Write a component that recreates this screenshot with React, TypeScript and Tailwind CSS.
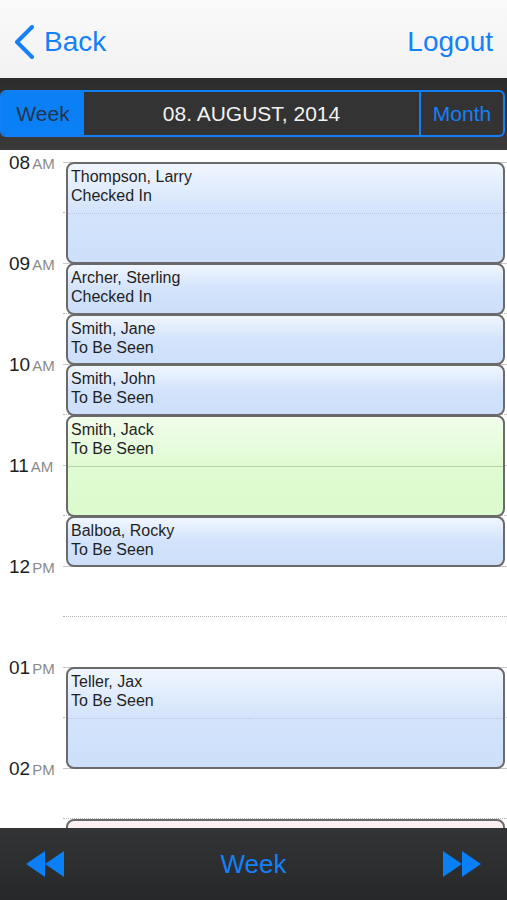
import * as React from "react";

interface Appointment {
  name: string;
  status: string;
  start: number; // hours, 24h
  end: number;
  tone: "blue" | "green" | "pink";
}

const HOUR = 101;
const FIRST_HOUR = 8;

const appointments: Appointment[] = [
  { name: "Thompson, Larry", status: "Checked In", start: 8, end: 9, tone: "blue" },
  { name: "Archer, Sterling", status: "Checked In", start: 9, end: 9.5, tone: "blue" },
  { name: "Smith, Jane", status: "To Be Seen", start: 9.5, end: 10, tone: "blue" },
  { name: "Smith, John", status: "To Be Seen", start: 10, end: 10.5, tone: "blue" },
  { name: "Smith, Jack", status: "To Be Seen", start: 10.5, end: 11.5, tone: "green" },
  { name: "Balboa, Rocky", status: "To Be Seen", start: 11.5, end: 12, tone: "blue" },
  { name: "Teller, Jax", status: "To Be Seen", start: 13, end: 14, tone: "blue" },
  { name: "", status: "", start: 14.5, end: 15.5, tone: "pink" },
];

const hours = [
  { h: "08", p: "AM" },
  { h: "09", p: "AM" },
  { h: "10", p: "AM" },
  { h: "11", p: "AM" },
  { h: "12", p: "PM" },
  { h: "01", p: "PM" },
  { h: "02", p: "PM" },
  { h: "03", p: "PM" },
];

const toneClass = {
  blue: "bg-gradient-to-b from-[#f0f6fe] via-[#d3e3fb] to-[#cddffa]",
  green: "bg-gradient-to-b from-[#f2fdec] via-[#e0fbd2] to-[#dcfacd]",
  pink: "bg-gradient-to-b from-[#fdf1f3] via-[#fbe4e8] to-[#fae0e5]",
};

function Rewind({ flip }: { flip?: boolean }) {
  return (
    <svg width="38" height="26" viewBox="0 0 38 26" className={flip ? "-scale-x-100" : ""}>
      <path d="M0 13 L19 0 L19 26 Z" fill="#0a7ff6" />
      <path d="M19 13 L38 0 L38 26 Z" fill="#0a7ff6" />
    </svg>
  );
}

export default function App() {
  return (
    <div
      className="relative h-[900px] w-[507px] overflow-hidden bg-white"
      style={{ fontFamily: '"Liberation Sans", Arial, sans-serif' }}
    >
      {/* nav bar */}
      <div className="flex h-[78px] items-center justify-between bg-gradient-to-b from-[#fafafa] to-[#f2f2f2] pl-[13px] pr-[14px] pt-[6px]">
        <div className="flex items-center gap-[9px] text-[28px] text-[#1580f8]">
          <svg width="22" height="34" viewBox="0 0 22 34">
            <path d="M19 2 L4 17 L19 32" fill="none" stroke="#1580f8" strokeWidth="4" strokeLinecap="round" strokeLinejoin="round" />
          </svg>
          <span>Back</span>
        </div>
        <span className="text-[28px] text-[#1580f8]">Logout</span>
      </div>

      {/* segmented bar */}
      <div className="h-[72px] bg-gradient-to-b from-[#2c2c2c] to-[#3a3a3a] pt-[12px]">
        <div className="flex h-[47px] w-[505px] overflow-hidden rounded-[6px] border-2 border-[#137ff4] bg-[#333333]">
          <div className="flex w-[82px] items-center justify-center bg-[#0b80f6] text-[21px] text-[#22344a]">
            Week
          </div>
          <div className="flex flex-1 items-center justify-center text-[21px] text-[#f2f2f2]">
            08. AUGUST, 2014
          </div>
          <div className="flex w-[84px] items-center justify-center border-l-2 border-[#137ff4] text-[21px] text-[#1580f8]">
            Month
          </div>
        </div>
      </div>

      {/* timeline */}
      <div className="relative pt-[12px]">
        {hours.map((hr, i) => (
          <div key={i} className="relative h-[101px]">
            <div className="absolute left-[9px] top-[-13px] flex items-baseline">
              <span className="text-[19px] text-[#1e1e1e]">{hr.h}</span>
              <span className="ml-[2px] text-[15px] text-[#8a8a8a]">{hr.p}</span>
            </div>
            <div className="absolute left-[63px] right-0 top-0 h-px bg-[#c8c8c8]" />
            <div className="absolute left-[63px] right-0 top-[50px] border-t border-dotted border-[#b4b4b4]" />
          </div>
        ))}

        {appointments.map((a, i) => (
          <div
            key={i}
            className={`absolute left-[66px] w-[439px] rounded-[8px] border-2 border-[#6a6a6a] px-[3px] pt-[3px] text-[16px] leading-[19px] text-[#1f1f1f] ${toneClass[a.tone]}`}
            style={{
              top: 12 + (a.start - FIRST_HOUR) * HOUR,
              height: (a.end - a.start) * HOUR + 1,
            }}
          >
            <div>{a.name}</div>
            <div>{a.status}</div>
            {a.end - a.start >= 1 && (
              <div
                className={`absolute left-0 right-0 top-[49px] ${
                  a.tone === "green" ? "h-px bg-[#b9cfae]" : "border-t border-dotted border-[#b9c8dc]"
                }`}
              />
            )}
          </div>
        ))}
      </div>

      {/* bottom bar */}
      <div className="absolute bottom-0 left-0 flex h-[72px] w-[507px] items-center justify-between bg-gradient-to-b from-[#333436] to-[#27282a] px-[26px]">
        <Rewind />
        <span className="text-[26px] text-[#1580f8]">Week</span>
        <Rewind flip />
      </div>
    </div>
  );
}
